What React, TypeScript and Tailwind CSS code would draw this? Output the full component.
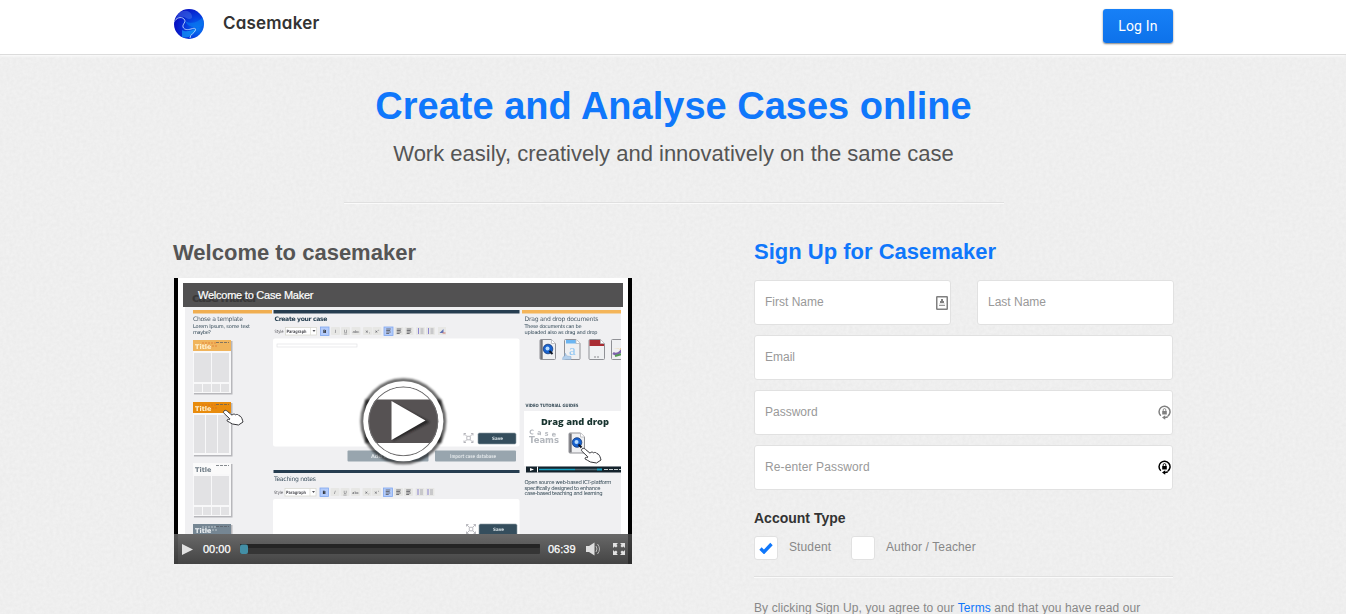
import React from "react";

function Grain() {
  return (
    <svg className="pointer-events-none absolute inset-0 h-full w-full" aria-hidden="true">
      <filter id="grain" x="0" y="0" width="100%" height="100%" colorInterpolationFilters="sRGB">
        <feTurbulence type="fractalNoise" baseFrequency="0.3" numOctaves="3" seed="4" stitchTiles="stitch" />
        <feColorMatrix values="0.035 0 0 0 0.918  0.035 0 0 0 0.918  0.035 0 0 0 0.918  0 0 0 0 1" />
      </filter>
      <rect width="100%" height="100%" filter="url(#grain)" />
    </svg>
  );
}

function Logo() {
  return (
    <svg className="h-[30px] w-[30px]" viewBox="0 0 30 30">
      <defs>
        <radialGradient id="globe" cx="0.8" cy="0.65" r="0.75">
          <stop offset="0" stopColor="#0878f2" />
          <stop offset="0.45" stopColor="#0643e2" />
          <stop offset="1" stopColor="#0713c4" />
        </radialGradient>
        <clipPath id="disc">
          <circle cx="15" cy="15" r="15" />
        </clipPath>
      </defs>
      <g clipPath="url(#disc)">
        <rect width="30" height="30" fill="url(#globe)" />
        <path d="M5 4C10 0 17 2 18 7C19 10 15 11 12 9C9 7 5 7 1 11Z" fill="#4a74e6" opacity="0.5" />
        <path d="M11 12C18 16 24 13 29 8L30 16C24 20 17 19 13 15Z" fill="#0878ee" opacity="0.7" />
        <path d="M8 21C12 24 18 21 22 20C20 26 14 30 8 28Z" fill="#12a3fa" opacity="0.65" />
        <path d="M0 13C2 9 7 7 10 10C13 13 8 15 9 18C10 21 14 21 17 20C20 19 22 19 21.500 21C21 24 16 25 16 29" fill="none" stroke="#bcd5fc" strokeWidth="0.9" />
      </g>
    </svg>
  );
}

function Thumb({ x, y, fill, cols, title, dark }: { x: number; y: number; fill: string; cols: number; title: string; dark?: boolean }) {
  const w = 36 / cols;
  return (
    <g>
      <rect x={x + 1} y={y + 1} width="38.500" height="53.500" fill="#b7b7bb" />
      <rect x={x} y={y} width="38" height="53" fill="#f8f8f9" />
      <rect x={x} y={y} width="38" height="11" fill={fill} />
      <path d={`M${x + 9} ${y + 3}h14M${x + 13} ${y + 6}h12`} stroke={dark ? "#ffffff" : "#d45a20"} strokeWidth="1.6" strokeDasharray="2 1" opacity="0.35" />
      <path d={`M${x + 23} ${y + 2.5}h13`} stroke="#555b63" strokeWidth="1" strokeDasharray="3 1" opacity="0.7" />
      <text x={x + 2} y={y + 9} fontSize="6.5" fontWeight="700" fill={title}>Title</text>
      {Array.from({ length: cols }, (_, i) => (
        <rect key={i} x={x + 1 + i * w} y={y + 13} width={w - 1} height={cols === 3 ? 38 : 29} fill="#e2e2e4" />
      ))}
      {cols === 2 && [0, 1, 2, 3].map((i) => <rect key={i} x={x + 1 + i * 9} y={y + 44} width="8" height="8" fill="#e2e2e4" />)}
    </g>
  );
}

function Hand({ x, y }: { x: number; y: number }) {
  return (
    <path
      transform={`translate(${x} ${y})`}
      d="M1 1C2-.3 3.5.4 4.5 1.4L9 5.2C10 3.8 11.5 3.8 12.5 4.8C14 4 15.4 4.6 16 5.6C18 6 18.8 8 19.5 10.2L20 12L15.5 15L9.5 14C7.5 13.3 5.5 11.5 4 10.8C3.8 9.4 5 9 6.5 9.6L6.8 8.8L1.2 3.5C.3 2.7.3 1.8 1 1Z"
      fill="#fff"
      stroke="#343438"
      strokeWidth="1"
    />
  );
}

function Toolbar({ x, y, extra }: { x: number; y: number; extra?: boolean }) {
  const glyphs = [
    [12.5, "I"], [22.5, "U"], [33, "abc"], [44.5, "×,"], [54, "×'"],
  ] as const;
  return (
    <g fontSize="4.4" fill="#55555b">
      <text x={x - 50} y={y + 1.8} textLength="9" lengthAdjust="spacingAndGlyphs">Style</text>
      <rect x={x - 39} y={y - 3.5} width="31" height="7.5" fill="#fff" stroke="#d6d6cd" strokeWidth="0.7" />
      <text x={x - 38} y={y + 1.8} fontWeight="700" textLength="20" lengthAdjust="spacingAndGlyphs">Paragraph</text>
      <path d={`M${x - 12} ${y - 1}h3l-1.5 2z`} />
      <path d={`M${x - 14} ${y - 3.5}v7.5`} stroke="#d6d6cd" strokeWidth="0.6" />
      <rect x={x - 4} y={y - 4} width="8.5" height="8.5" fill="#b3cbfb" stroke="#81a7ef" strokeWidth="0.8" />
      <text x={x - 1.4} y={y + 1.8} fontWeight="700" fill="#222">B</text>
      {glyphs.map(([dx, g]) => (
        <g key={g}>
          <rect x={x + dx - 6} y={y - 4} width="9" height="8" rx="1" fill="#e7e7e5" />
          <text x={x + dx - 1.5} y={y + 1.8} fontStyle={g === "I" ? "italic" : "normal"} textDecoration={g === "U" ? "underline" : undefined} textAnchor="middle" fontSize={g === "abc" ? 3.8 : 4.4}>{g}</text>
        </g>
      ))}
      <rect x={x + 59.5} y={y - 4} width="9" height="8.5" fill="#b3cbfb" stroke="#81a7ef" strokeWidth="0.8" />
      {[64, 74.5, 84.5].map((dx, i) => (
        <g key={dx}>
          {i > 0 && <rect x={x + dx - 4.5} y={y - 4} width="9" height="8" rx="1" fill="#e7e7e5" />}
          <path d={`M${x + dx - 2.3} ${y - 2}h4.6m-4.6 1.5h4m-4 1.5h4.6m-4.6 1.5h3`} stroke="#55555c" strokeWidth="0.8" fill="none" />
        </g>
      ))}
      {[96, 106].map((dx) => (
        <g key={dx}>
          <rect x={x + dx - 4.5} y={y - 4} width="9" height="8" rx="1" fill="#e7e7e5" />
          <path d={`M${x + dx - 2} ${y - 3}v6`} stroke="#8b84d0" strokeWidth="1" />
          <path d={`M${x + dx} ${y - 2}h3m-3 2h3m-3 2h3`} stroke="#9c9ca3" strokeWidth="0.8" />
        </g>
      ))}
      {extra && (
        <g>
          <rect x={x + 113.5} y={y - 4} width="8" height="8" fill="#e7e7e5" />
          <path d={`M${x + 115} ${y + 2}l4-4v4z`} fill="#5e72b5" />
          <path d={`M${x + 118} ${y + 2}h3`} stroke="#ce7770" />
        </g>
      )}
    </g>
  );
}

function Doc({ x, y, children }: { x: number; y: number; children?: React.ReactNode }) {
  return (
    <g transform={`translate(${x} ${y})`}>
      <path d="M1.500.5H12L16 4.5V19.500Q16 20.500 15 20.500H1.500Q.5 20.500.5 19.500V1.500Q.5.5 1.500.5Z" fill="#eff0f2" stroke="#909196" strokeWidth="1" />
      {children}
      <path d="M12 .5V4.5H16" fill="#fff" stroke="#b5b6ba" strokeWidth="0.8" />
    </g>
  );
}

function SearchDoc() {
  return (
    <>
      <path d="M2 1V20" stroke="#717277" strokeWidth="2.4" />
      <circle cx="8.5" cy="10" r="4.800" fill="#1762cf" stroke="#173b78" strokeWidth="0.8" />
      <circle cx="8" cy="9.5" r="2" fill="#b8ddff" />
      <path d="M10 12L13 15" stroke="#111827" strokeWidth="2" />
    </>
  );
}

function Expand({ x, y }: { x: number; y: number }) {
  return (
    <g transform={`translate(${x} ${y})`} stroke="#aaaab0" strokeWidth="0.8" fill="none">
      <path d="M2.800 2.800h3.500v3.500h-3.500zM2.500 2.500L0 0M6.500 2.500L9 0M2.500 6.500L0 9M6.500 6.500L9 9M0 2V0H2M7 0H9V2M0 7V9H2M7 9H9V7" />
    </g>
  );
}

function SaveButton({ x, y }: { x: number; y: number }) {
  return (
    <g>
      <rect x={x} y={y} width="38" height="11" rx="1.5" fill="#354e5d" stroke="#8c9aa3" strokeWidth="0.6" />
      <text x={x + 14} y={y + 7} fontSize="4.500" fontWeight="700" fill="#dce5e9" textLength="11" lengthAdjust="spacingAndGlyphs">Save</text>
    </g>
  );
}

function Poster() {
  return (
    <svg className="absolute inset-0 h-full w-full" viewBox="174 278 458 286" fontFamily="'DejaVu Sans', sans-serif">
      <defs>
        <linearGradient id="controls" x1="0" y1="0" x2="0" y2="1">
          <stop offset="0" stopColor="#686868" />
          <stop offset="1" stopColor="#444" />
        </linearGradient>
        <filter id="ringShadow" x="-20%" y="-20%" width="140%" height="140%">
          <feGaussianBlur stdDeviation="1.2" />
        </filter>
        <filter id="videoSoft" x="0" y="0" width="100%" height="100%" colorInterpolationFilters="sRGB">
          <feGaussianBlur stdDeviation="0.35" />
        </filter>
        <clipPath id="capture">
          <rect x="183" y="283" width="438" height="281" />
        </clipPath>
        <clipPath id="playDisc">
          <circle cx="403.300" cy="421.300" r="35" />
        </clipPath>
      </defs>
      <rect x="174" y="278" width="458" height="286" fill="#000" />
      <rect x="178" y="278" width="450" height="286" fill="#fff" />
      <g clipPath="url(#capture)">
        <g filter="url(#videoSoft)">
          <rect x="185" y="307" width="440" height="257" fill="#f0f0f2" />
          <rect x="193" y="310" width="79" height="3.5" fill="#f0ae51" />
          <rect x="273.5" y="310" width="246" height="3.5" fill="#263d50" />
          <rect x="522" y="310" width="103" height="3.5" fill="#f4b55a" />
          <text x="193" y="321" fontSize="6.1" fill="#4d5d68" textLength="50">Chose a template</text>
          <g fontSize="5" fill="#2d4453">
            <text x="193" y="328.3" textLength="57">Lorem Ipsum, some text</text>
            <text x="193" y="333.8" textLength="18">maybe?</text>
            <text x="524.5" y="328" textLength="57">These documents can be</text>
            <text x="524.5" y="334" textLength="73">uploaded also as drag and drop</text>
          </g>
          <text x="274.5" y="321" fontSize="6.1" fontWeight="700" fill="#263f51" textLength="53">Create your case</text>
          <text x="524.5" y="321" fontSize="6.1" fill="#4d5d68" textLength="74">Drag and drop documents</text>
          <rect x="273" y="338.5" width="246.500" height="108" rx="2" fill="#fff" />
          <rect x="277" y="344" width="80" height="3" fill="#fff" stroke="#dedee0" strokeWidth="0.6" />
          <Toolbar x={324.5} y={331} extra />
          <Thumb x={193} y={340} fill="#f0b45c" cols={2} title="#fff1d0" />
          <Thumb x={193} y={402} fill="#e88b0c" cols={3} title="#fff1d0" />
          <Thumb x={193} y={463} fill="#fafafa" cols={2} title="#6d7a84" dark />
          <Thumb x={193} y={524} fill="#758693" cols={2} title="#eef2f5" dark />
          <Hand x={223} y={410} />
          <Expand x={464} y={433.5} />
          <SaveButton x={478} y={433} />
          <rect x="347.500" y="450.500" width="81" height="11" rx="1" fill="#98a5ae" />
          <rect x="435" y="450.500" width="81" height="11" rx="1" fill="#98a5ae" />
          <text x="371" y="458" fontSize="5" fontWeight="700" fill="#dfe4e7">Add case</text>
          <text x="450" y="458" fontSize="5" fontWeight="700" fill="#dfe4e7" textLength="46" lengthAdjust="spacingAndGlyphs">Import case database</text>
          <rect x="273.500" y="470" width="246" height="3" fill="#263d50" />
          <text x="274" y="480.500" fontSize="6.100" fill="#3e5260" textLength="42">Teaching notes</text>
          <Toolbar x={324} y={492} />
          <rect x="273" y="499" width="246.500" height="42" rx="2" fill="#fff" />
          <Expand x={466.5} y={524.5} />
          <SaveButton x={479} y={524} />
          <Doc x={539.5} y={339}><SearchDoc /></Doc>
          <Doc x={564} y={339}>
            <rect x="2" y="1" width="10" height="3.500" fill="#6bb5f2" />
            <text x="5" y="16" fontFamily="'Liberation Serif', serif" fontSize="15" fill="#91c6f2">a</text>
            <path d="M-1.500 20.500Q-1.500 17 1 17V14L3 17L7 17.500V20.500Z" fill="#b4d0ec" stroke="#8faed0" strokeWidth="0.5" />
          </Doc>
          <Doc x={588.5} y={339}>
            <path d="M1 1H12L15.500 5V7H1Z" fill="#a92c33" />
            <path d="M7 17l-1 1 1 1m2-2 1 1-1 1" stroke="#606066" strokeWidth="0.7" fill="none" />
          </Doc>
          <Doc x={611} y={339}>
            <path d="M2 9l7 1 4-4v5z" fill="#e9b044" />
            <path d="M2 14q4 3 9-3" stroke="#7e63ab" strokeWidth="2.500" fill="none" />
            <path d="M4 17l7-2" stroke="#549a55" strokeWidth="2" />
          </Doc>
          <text x="525.500" y="407" fontSize="4.400" fontWeight="700" fill="#344955" textLength="53" lengthAdjust="spacingAndGlyphs">VIDEO TUTORIAL GUIDES</text>
          <rect x="524" y="411" width="101" height="55" fill="#fff" />
          <text x="541" y="425" fontFamily="'Open Sans', sans-serif" fontSize="9.500" fontWeight="800" fill="#18342f" textLength="68" lengthAdjust="spacingAndGlyphs">Drag and drop</text>
          <text x="529" y="434" fontSize="6.500" fontWeight="700" fill="#b3b7bd" transform="rotate(6 529 434)" textLength="27">Case</text>
          <text x="529" y="443" fontSize="8.500" fontWeight="700" fill="#b3b7bd" textLength="30" lengthAdjust="spacingAndGlyphs">Teams</text>
          <Doc x={568.5} y={432.5}><SearchDoc /></Doc>
          <Hand x={581} y={448} />
          <rect x="526" y="466.500" width="99" height="6" fill="#15232c" />
          <path d="M537.500 466.500v6" stroke="#fff" strokeWidth="1" />
          <path d="M530 468l4 1.500-4 1.500z" fill="#fff" />
          <path d="M539 469.500H575" stroke="#1aa3c4" strokeWidth="1.500" />
          <path d="M575 469.500H597" stroke="#526873" strokeWidth="1.500" />
          <path d="M597 469.500H602" stroke="#1aa3c4" strokeWidth="2" />
          <path d="M604 469.500H625" stroke="#c6d0d3" strokeWidth="1" strokeDasharray="4 1" />
          <g fontSize="5.300" fill="#344955">
            <text x="524.500" y="484" textLength="87">Open source web-based ICT-platform</text>
            <text x="524.500" y="489.500" textLength="76">specifically designed to enhance</text>
            <text x="524.500" y="495" textLength="78">case-based teaching and learning</text>
          </g>
        </g>
      </g>
      <rect x="183" y="283" width="440" height="24" fill="#525152" />
      <text x="192" y="302" fontSize="12" fontWeight="700" fill="#393839" textLength="66">case maker</text>
      <text x="198" y="299" fontFamily="'Liberation Sans', Arial, sans-serif" fontSize="11" fill="#fff" stroke="#fff" strokeWidth="0.2" textLength="115.500">Welcome to Case Maker</text>

      <rect x="365" y="399.500" width="76.500" height="43.500" fill="#333" filter="url(#ringShadow)" opacity="0.800" />
      <circle cx="403.300" cy="421.300" r="41" fill="none" stroke="#000" strokeWidth="4" opacity="0.600" filter="url(#ringShadow)" />
      <circle cx="403.300" cy="421.300" r="40" fill="#fff" />
      <g clipPath="url(#playDisc)">
        <rect x="366" y="399.500" width="76" height="43.500" fill="#565253" />
        <path d="M393 403L430 422L393 441Z" fill="#1d1b1c" opacity="0.800" filter="url(#ringShadow)" />
        <circle cx="403.300" cy="421.300" r="34.500" fill="none" stroke="#6f6e6f" strokeWidth="1.200" />
      </g>
      <path d="M391.500 401L425.500 420.500L391.500 440Z" fill="#fff" />

      <rect x="174" y="534" width="458" height="30" fill="url(#controls)" />
      <rect x="174" y="534" width="4" height="30" fill="#222" opacity="0.250" />
      <rect x="628" y="534" width="4" height="30" fill="#111" opacity="0.450" />
      <path d="M182 544L193 549.500L182 555Z" fill="#e1e1e1" />
      <rect x="240" y="544" width="300" height="10" rx="1" fill="#353535" />
      <rect x="240" y="544" width="300" height="4" rx="1" fill="#242424" />
      <rect x="240" y="544.500" width="8" height="9.500" rx="2" fill="#438fa6" />
      <g fontFamily="'Liberation Sans', Arial, sans-serif" fontSize="11" fill="#fff" stroke="#fff" strokeWidth="0.250">
        <text x="203" y="553">00:00</text>
        <text x="548" y="553">06:39</text>
      </g>
      <path d="M586 546H589L594.500 542.500V555.500L589 552H586Z" fill="#dedede" />
      <path d="M596 546q2 3 0 6M597.500 544q4 5 0 10" stroke="#bababa" fill="none" />
      <path d="M613 543H618L616.500 544.500L617.500 546L616 547.500L614.500 546.500L613 548ZM625 543H620L621.500 544.500L620.500 546L622 547.500L623.500 546.500L625 548ZM613 555H618L616.500 553.500L617.500 552L616 550.500L614.500 551.500L613 550ZM625 555H620L621.500 553.500L620.500 552L622 550.500L623.500 551.500L625 550Z" fill="#e2e2e2" />
    </svg>
  );
}

function LockIcon({ color }: { color: string }) {
  return (
    <svg className="h-[15px] w-[13px]" viewBox="0 0 13 15" fill="none">
      <path d="M2.800 10.800A5.500 5.500 0 1 1 9.800 11.200" stroke={color} strokeWidth="1.500" />
      <path d="M4 12.500L7.200 10.300V11.700L9.800 11V12.800L7.200 13.300V14.700Z" fill={color} />
      <path d="M4.200 6H8.800V9.500H4.200Z" fill={color} />
      <path d="M5.200 6V4.900A1.300 1.300 0 0 1 7.800 4.900V6" stroke={color} strokeWidth="0.900" />
    </svg>
  );
}

function Field({ label, className = "", children }: { label: string; className?: string; children?: React.ReactNode }) {
  return (
    <label className={`flex h-[45px] items-center justify-between rounded-[3px] border border-[#e1e1e1] bg-white pl-[10px] pr-px text-[12px] text-[#999] ${className}`}>
      <span className="-mt-[2px]">{label}</span>
      {children}
    </label>
  );
}

function Rule({ className = "" }: { className?: string }) {
  return <div className={`h-[2px] border-t border-[#e0e0e0] bg-[#fafafa] ${className}`} />;
}

export default function App() {
  return (
    <div className="relative h-[614px] overflow-hidden bg-[#efefef] font-['Liberation_Sans',Arial,sans-serif]">
      <Grain />
      <div className="relative">
        <header className="h-[55px] border-b border-[#dcdcdc] bg-white shadow-[0_1px_3px_rgba(255,255,255,0.9)]">
          <div className="mx-auto flex w-[1000px] justify-between pl-px pt-[9px]">
            <div className="flex h-[30px] items-center gap-[18px]">
              <Logo />
              <span className="pl-px font-['Inter',sans-serif] text-[17px] font-semibold tracking-[0.2px] text-[#333] [font-feature-settings:'cv11']">Casemaker</span>
            </div>
            <button className="h-[34px] w-[70px] rounded-[3px] bg-linear-to-b from-[#1780f7] to-[#0d72ea] font-['Roboto',sans-serif] text-[14px] tracking-[0.2px] text-white shadow-[0_1px_2px_rgba(0,0,0,0.5)]">Log In</button>
          </div>
        </header>
        <main className="mx-auto w-[1000px]">
          <section className="pt-[27px] text-center">
            <h1 className="h-[48px] whitespace-nowrap pl-px text-[38px] font-bold leading-[49px] text-[#0f77fb]">Create and Analyse Cases online</h1>
            <p className="mt-[11px] h-[26px] whitespace-nowrap pl-px text-[22px] leading-[26px] text-[#555]">Work easily, creatively and innovatively on the same case</p>
            <Rule className="ml-[171px] mt-[35px] w-[660px]" />
          </section>
          <div className="flex justify-between pl-px pt-[34px]">
            <section className="w-[458px]">
              <h2 className="-ml-px h-[40px] whitespace-nowrap pt-px text-[22px] font-bold leading-[28px] text-[#555]">Welcome to casemaker</h2>
              <div className="relative h-[286px] w-[458px]">
                <Poster />
              </div>
            </section>
            <section className="w-[419px]">
              <h2 className="h-[42px] whitespace-nowrap text-[22px] font-bold leading-[28px] text-[#0f77fb]">Sign Up for Casemaker</h2>
              <form className="flex flex-col gap-[10px]">
                <div className="flex gap-[26px]">
                  <Field label="First Name" className="w-[197px] shrink-0">
                    <svg className="mr-px h-[14px] w-[12px]" viewBox="0 0 12 14">
                      <rect x="0.750" y="0.750" width="10.500" height="12.500" rx="0.500" fill="#fff" stroke="#808080" strokeWidth="1.500" />
                      <path d="M5 3H7V5H8V7H4V5H5Z" fill="#808080" />
                      <path d="M3 9.500H9" stroke="#999" />
                      <path d="M3 8H9" stroke="#ccc" />
                    </svg>
                  </Field>
                  <Field label="Last Name" className="w-[197px] shrink-0" />
                </div>
                <Field label="Email" />
                <Field label="Password"><LockIcon color="#808080" /></Field>
                <Field label="Re-enter Password" className="tracking-[0.12px]"><LockIcon color="#000" /></Field>
              </form>
              <h3 className="mt-[20px] h-[26px] text-[14px] font-bold leading-[16px] text-[#333]">Account Type</h3>
              <div className="flex h-[24px] text-[12px] leading-[22px] tracking-[0.12px] text-[#888]">
                <span className="flex h-[24px] w-[24px] items-center justify-center rounded-[3px] border border-[#e1e1e1] bg-white">
                  <svg className="h-[12px] w-[14px]" viewBox="0 0 14 12"><path d="M1.500 6.500L5 10L12.500 2" fill="none" stroke="#0f77fb" strokeWidth="3.300" /></svg>
                </span>
                <span className="ml-[11px] w-[62px]">Student</span>
                <span className="h-[24px] w-[24px] rounded-[3px] border border-[#e1e1e1] bg-white" />
                <span className="ml-[11px]">Author / Teacher</span>
              </div>
              <Rule className="mt-[16px]" />
              <p className="mt-[21px] whitespace-nowrap text-[12px] leading-[18px] tracking-[0.1px] text-[#888]">By clicking Sign Up, you agree to our <a className="text-[#0f77fb]">Terms</a> and that you have read our</p>
            </section>
          </div>
        </main>
      </div>
    </div>
  );
}
